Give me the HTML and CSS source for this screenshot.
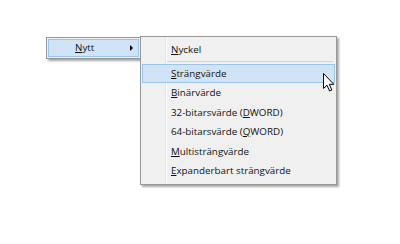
FILE: index.html
```html
<!DOCTYPE html>
<html lang="sv">
<head>
    <meta charset="UTF-8">
    <title>Nytt</title>
    <link rel="stylesheet" href="styles.css">
</head>
<body>
    <div class="desk">
        <div class="menu menu-main">
            <div class="item hot has-sub"><span><u>N</u>ytt</span><span class="arrow"></span></div>
        </div>
        <div class="menu menu-sub">
            <div class="item"><u>N</u>yckel</div>
            <div class="sep"></div>
            <div class="item hot"><u>S</u>trängvärde</div>
            <div class="item"><u>B</u>inärvärde</div>
            <div class="item">32-bitarsvärde (<u>D</u>WORD)</div>
            <div class="item">64-bitarsvärde (<u>Q</u>WORD)</div>
            <div class="item"><u>M</u>ultisträngvärde</div>
            <div class="item"><u>E</u>xpanderbart strängvärde</div>
            <svg class="cursor" width="13" height="19" viewBox="0 0 13 19">
                <path d="M0.5 0.5 L0.5 15.5 L4 12.2 L6.6 18 L8.8 17 L6.3 11.3 L10.8 11.3 Z" fill="#fff" stroke="#000" stroke-width="1" stroke-linejoin="miter"/>
            </svg>
        </div>
    </div>
</body>
</html>
```

FILE: styles.css
```css
* {
    margin: 0;
    padding: 0;
    box-sizing: border-box;
}
body {
    width: 400px;
    height: 244px;
    background: #fff;
    font-family: "Open Sans", "Noto Sans", sans-serif;
    font-size: 9.8px;
    color: #111;
    overflow: hidden;
}
.desk {
    display: flex;
    align-items: flex-start;
    padding: 37px 0 0 46px;
}
.menu {
    background: #f0f0f0;
    border: 1px solid #979797;
    box-shadow: 2px 2px 2px rgba(0, 0, 0, 0.35);
}
.menu-main {
    width: 95px;
    padding: 1px;
}
.menu-sub {
    position: relative;
    width: 197px;
    margin: -1px 0 0 -1px;
    padding: 3px 1px 3px 1px;
    background:
        linear-gradient(to right, transparent 24px, #e2e3e3 24px, #e2e3e3 25px, #fff 25px, #fff 26px, transparent 26px),
        #f0f0f0;
}
.item {
    height: 19.5px;
    line-height: 17.5px;
    border: 1px solid transparent;
    padding-left: 28px;
    white-space: nowrap;
}
.item u {
    text-underline-offset: 1px;
}
.has-sub {
    height: 18px;
    line-height: 16px;
    padding-left: 26px;
    padding-right: 5px;
    display: flex;
    justify-content: space-between;
    align-items: center;
}
.hot {
    background: #d1e4f7;
    border-color: #99c4ec;
}
.arrow {
    width: 0;
    height: 0;
    border-top: 3px solid transparent;
    border-bottom: 3px solid transparent;
    border-left: 3px solid #000;
}
.sep {
    height: 1px;
    margin: 1px 2px 2px 25px;
    background: #d5d5d5;
}
.cursor {
    position: absolute;
    left: 182px;
    top: 36px;
}
```
